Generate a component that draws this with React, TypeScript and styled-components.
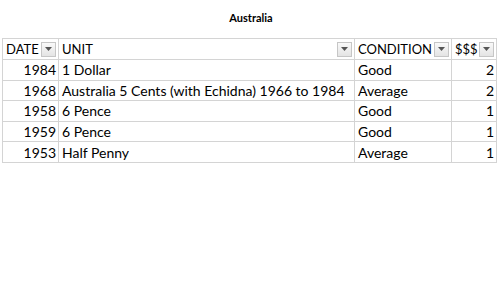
import React from 'react';
import styled, { createGlobalStyle } from 'styled-components';

const GlobalStyle = createGlobalStyle`
  html, body {
    margin: 0;
    padding: 0;
    background: #ffffff;
  }
  body {
    font-family: Lato, 'Liberation Sans', sans-serif;
    color: #000;
  }
`;

const Page = styled.div`
  width: 500px;
  height: 281px;
  display: flex;
  flex-direction: column;
  padding: 11px 4px 0 2px;
  box-sizing: border-box;
`;

const Title = styled.div`
  text-align: center;
  font-size: 11px;
  font-weight: 700;
  height: 27px;
  line-height: 14px;
  padding-left: 4px;
`;

const Sheet = styled.table`
  border-collapse: collapse;
  table-layout: fixed;
  width: 494px;
  font-size: 14px;
`;

const HeadCell = styled.th<{ $w: number }>`
  width: ${p => p.$w}px;
  height: 21px;
  padding: 0 2px 0 3px;
  border: 1px solid #d4d4d4;
  font-weight: 400;
  font-size: 13px;
  text-align: left;
  white-space: nowrap;
  box-sizing: border-box;
`;

const HeadInner = styled.div`
  display: flex;
  align-items: center;
  justify-content: space-between;
`;

const FilterButton = styled.span`
  width: 15px;
  height: 15px;
  box-sizing: border-box;
  border: 1px solid #c6c6c6;
  background: linear-gradient(#f9f9f9, #e4e4e4);
  display: flex;
  align-items: center;
  justify-content: center;
`;

const Cell = styled.td<{ $num?: boolean }>`
  height: 20.6px;
  padding: 0 2px 0 3px;
  border: 1px solid #d4d4d4;
  text-align: ${p => (p.$num ? 'right' : 'left')};
  white-space: nowrap;
  overflow: hidden;
  box-sizing: border-box;
`;

const columns = [
  { key: 'date', label: 'DATE', width: 56 },
  { key: 'unit', label: 'UNIT', width: 296 },
  { key: 'cond', label: 'CONDITION', width: 97 },
  { key: 'price', label: '$$$', width: 45 },
];

const rows = [
  { date: 1984, unit: '1 Dollar', cond: 'Good', price: 2 },
  { date: 1968, unit: 'Australia 5 Cents (with Echidna) 1966 to 1984', cond: 'Average', price: 2 },
  { date: 1958, unit: '6 Pence', cond: 'Good', price: 1 },
  { date: 1959, unit: '6 Pence', cond: 'Good', price: 1 },
  { date: 1953, unit: 'Half Penny', cond: 'Average', price: 1 },
];

const Arrow = () => (
  <svg width="7" height="4" viewBox="0 0 7 4">
    <path d="M0 0 L7 0 L3.5 4 Z" fill="#555" />
  </svg>
);

const App: React.FC = () => {
  return (
    <>
      <GlobalStyle />
      <Page>
        <Title>Australia</Title>
        <Sheet>
          <thead>
            <tr>
              {columns.map(c => (
                <HeadCell key={c.key} $w={c.width}>
                  <HeadInner>
                    <span>{c.label}</span>
                    <FilterButton>
                      <Arrow />
                    </FilterButton>
                  </HeadInner>
                </HeadCell>
              ))}
            </tr>
          </thead>
          <tbody>
            {rows.map(r => (
              <tr key={r.date + r.unit}>
                <Cell $num>{r.date}</Cell>
                <Cell>{r.unit}</Cell>
                <Cell>{r.cond}</Cell>
                <Cell $num>{r.price}</Cell>
              </tr>
            ))}
          </tbody>
        </Sheet>
      </Page>
    </>
  );
};

export default App;
